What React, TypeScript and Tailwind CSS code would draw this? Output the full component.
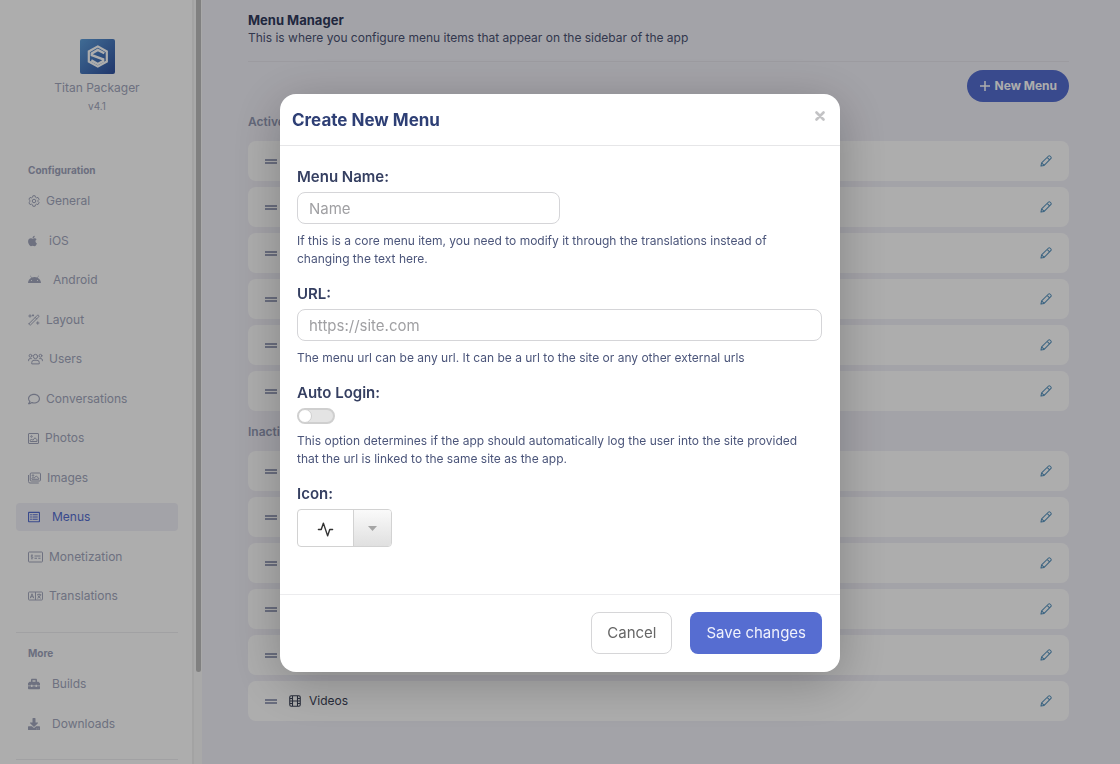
import React, { useState } from "react";
import { FaApple, FaAndroid, FaToolbox, FaDownload, FaRegComment, FaRegListAlt } from "react-icons/fa";

function GearIcon() {
  return (
    <svg className="h-3 w-3" viewBox="0 0 24 24" fill="none" stroke="currentColor" strokeWidth="2" strokeLinejoin="round">
      <path d="M9.800 1.500h4.400l.8 3 2 1.200 3-.8 2.200 3.800-2.200 2.200v2.200l2.200 2.200-2.200 3.800-3-.8-2 1.200-.8 3H9.800l-.8-3-2-1.200-3 .8-2.200-3.800L4 13.100v-2.200L1.800 8.700 4 4.900l3 .8 2-1.200z" />
      <circle cx="12" cy="12" r="3.500" />
    </svg>
  );
}

function WandIcon() {
  return (
    <svg className="h-3 w-3" viewBox="0 0 24 24" fill="none" stroke="currentColor" strokeWidth="2" strokeLinejoin="round" strokeLinecap="round">
      <path d="M2.500 18.800 18.800 2.500a1.500 1.500 0 0 1 2.100 0l.8.8a1.500 1.500 0 0 1 0 2.100L5.300 21.700a1.500 1.500 0 0 1-2.100 0l-.8-.8a1.500 1.500 0 0 1 0-2.100zM14.500 7l2.700 2.700" />
      <path d="M4 1.500v5M1.500 4h5M19.500 15.500v5M17 18h5M10 1.500v2.600M8.700 2.800h2.600" />
    </svg>
  );
}

function UsersIcon() {
  return (
    <svg className="h-3 w-[15px]" viewBox="0 0 30 24" fill="none" stroke="currentColor" strokeWidth="2" strokeLinecap="round" strokeLinejoin="round">
      <circle cx="15" cy="7" r="4.300" />
      <circle cx="5" cy="5.500" r="2.800" />
      <circle cx="25" cy="5.500" r="2.800" />
      <path d="M7.500 21v-2a4.500 4.500 0 0 1 4.500-4.500h6a4.500 4.500 0 0 1 4.500 4.500v2zM1.200 15.500v-1.300a3 3 0 0 1 3-3h2.600M28.800 15.500v-1.300a3 3 0 0 0-3-3h-2.600" />
    </svg>
  );
}

function PhotoIcon() {
  return (
    <svg className="h-[11px] w-[11px]" viewBox="0 0 22 22" fill="none" stroke="currentColor" strokeWidth="2" strokeLinejoin="round">
      <rect x="1" y="1" width="20" height="20" rx="1" />
      <circle cx="7" cy="7" r="1.500" />
      <path d="M4.500 17v-2.500L7 12l2.500 2.500 4.500-5 4 4V17z" />
    </svg>
  );
}

function ImagesIcon() {
  return (
    <svg className="h-3 w-[13px]" viewBox="0 0 26 24" fill="none" stroke="currentColor" strokeWidth="2" strokeLinejoin="round">
      <rect x="4.500" y="2" width="20.500" height="16" rx="2" />
      <path d="M21.500 22H4a3 3 0 0 1-3-3V6" />
      <circle cx="10" cy="7" r="1.500" />
      <path d="M8 14.500v-2l2-2 2 2 4.500-4.500 5 4.500v2z" />
    </svg>
  );
}

function CheckIcon() {
  return (
    <svg className="h-3 w-[15px]" viewBox="0 0 30 24" fill="none" stroke="currentColor" strokeWidth="2">
      <rect x="1" y="2" width="28" height="20" rx="1.500" />
      <path d="M9.800 9.300c-.5-.9-3.800-1-3.800.8s3.800 1.200 3.800 3-3.300 1.800-3.900.7M7.900 6.500v10.500" strokeWidth="1.600" />
      <path d="M13 10h12M13 14.500h5M20.500 14.500H25" />
    </svg>
  );
}

function TranslateIcon() {
  return (
    <svg className="h-3 w-[15px]" viewBox="0 0 30 24" fill="none" stroke="currentColor" strokeWidth="1.900">
      <rect x="1" y="4" width="28" height="16" rx="1.500" />
      <path d="M15 4v16M4.500 16.500 8 7.500l3.500 9M5.800 13.500h4.400M18 9.500h8.500M22.200 7v2.500M25 9.500c-.8 3.300-3 5.700-6.300 7M19.800 11.500c1.300 2.500 3.200 4 5.700 5" />
    </svg>
  );
}

function LogoIcon() {
  return (
    <svg className="h-[35px] w-[35px]" viewBox="0 0 35 35" role="img" aria-label="Titan Packager">
      <defs>
        <linearGradient id="logo" x1="0" y1="0" x2="1" y2="1">
          <stop offset="0" stopColor="#5f9fdb" />
          <stop offset="1" stopColor="#30519f" />
        </linearGradient>
      </defs>
      <rect width="35" height="35" rx="2" fill="url(#logo)" />
      <path d="M17.800 7.400 26.800 12.500v10L17.800 27.600 8.800 22.500v-10z" fill="none" stroke="#fff" strokeWidth="2.200" />
      <path d="M24.300 14.300 17.800 10.900 11.800 14.400v1.800l11.400 4.200v1.700l-5.400 2.900-6.500-3.600" fill="none" stroke="#fff" strokeWidth="2.400" />
    </svg>
  );
}

function FilmIcon() {
  return (
    <svg className="h-3 w-3" viewBox="0 0 24 24" fill="none" stroke="currentColor" strokeWidth="2.200">
      <rect x="1.500" y="1.500" width="21" height="21" rx="3" />
      <path d="M7 2v20M17 2v20M7 12h10M2 7h5M2 12h5M2 17h5M17 7h5M17 12h5M17 17h5" />
    </svg>
  );
}

function PencilIcon() {
  return (
    <svg className="h-3 w-3" viewBox="0 0 26 26" fill="none" stroke="currentColor" strokeWidth="2.200" strokeLinejoin="round">
      <path d="M2 24l1.500-7L18 2.700a3 3 0 0 1 4.200 0l1.100 1.100a3 3 0 0 1 0 4.200L9 22.500zM15.500 5.300l5.200 5.200M3.500 17 9 22.500" />
    </svg>
  );
}

function Handle() {
  return (
    <span className="flex w-3 flex-col gap-px" aria-hidden="true">
      <span className="h-0.5 bg-[#9ca2bb]" />
      <span className="h-0.5 bg-[#9ca2bb]" />
    </span>
  );
}

type NavItem = { label: string; icon: React.ReactNode; gap: string; active?: boolean };

const configuration: NavItem[] = [
  { label: "General", icon: <GearIcon />, gap: "gap-1.5" },
  { label: "iOS", icon: <FaApple className="h-3 w-[9px]" />, gap: "gap-3" },
  { label: "Android", icon: <FaAndroid className="h-[14px] w-[13px]" />, gap: "gap-3" },
  { label: "Layout", icon: <WandIcon />, gap: "gap-1.5" },
  { label: "Users", icon: <UsersIcon />, gap: "gap-1.5" },
  { label: "Conversations", icon: <FaRegComment className="h-3 w-3" />, gap: "gap-1.5" },
  { label: "Photos", icon: <PhotoIcon />, gap: "gap-1.5" },
  { label: "Images", icon: <ImagesIcon />, gap: "gap-1.5" },
  { label: "Menus", icon: <FaRegListAlt className="h-3 w-3" />, gap: "gap-3", active: true },
  { label: "Monetization", icon: <CheckIcon />, gap: "gap-1.5" },
  { label: "Translations", icon: <TranslateIcon />, gap: "gap-1.5" },
];

const more: NavItem[] = [
  { label: "Builds", icon: <FaToolbox className="h-3 w-3" />, gap: "gap-3" },
  { label: "Downloads", icon: <FaDownload className="h-3 w-3" />, gap: "gap-3" },
];

function NavLink({ item }: { item: NavItem }) {
  return (
    <a
      href="#"
      className={`flex h-7 items-center rounded-sm pl-3 text-[12px] ${item.gap} ${
        item.active ? "bg-[#f1f0f8] text-[#556ed0]" : "text-[#a2a7bd]"
      }`}
    >
      {item.icon}
      {item.label}
    </a>
  );
}

function Sidebar() {
  return (
    <aside className="flex h-screen w-[202px] shrink-0 overflow-hidden bg-white">
      <div className="flex-1 border-r border-[#f0f0f0] pr-[14px] pl-4">
        <div className="flex flex-col items-center pt-[39px] text-[#a2a7bd]">
          <LogoIcon />
          <p className="mt-[5px] text-[12px] leading-[18px]">Titan Packager</p>
          <p className="text-[10px] leading-[18px]">v4.1</p>
        </div>
        <h2 className="mt-[47px] pl-3 text-[10px] leading-4 font-bold text-[#9ea3bb]">Configuration</h2>
        <nav className="mt-[9px] flex min-h-[423px] flex-col justify-between" aria-label="Configuration">
          {configuration.map((item) => (
            <NavLink key={item.label} item={item} />
          ))}
        </nav>
        <hr className="mt-[22px] border-[#ededf0]" />
        <h2 className="mt-3 pl-3 text-[10px] leading-4 font-bold text-[#9ea3bb]">More</h2>
        <nav className="mt-[9px] flex flex-col gap-3" aria-label="More">
          {more.map((item) => (
            <NavLink key={item.label} item={item} />
          ))}
        </nav>
        <hr className="mt-[21px] border-[#ededf0]" />
      </div>
      <div className="w-[9px] border-l border-[#f0f0f0] bg-[#f9f9f9] pl-0.5">
        <div className="h-[88%] w-[5px] rounded-b-full bg-[#bdbdbd]" />
      </div>
    </aside>
  );
}

type Menu = { name: string; icon?: React.ReactNode };

const activeMenus: Menu[] = Array.from({ length: 6 }, () => ({ name: "" }));
const inactiveMenus: Menu[] = [
  ...Array.from({ length: 5 }, () => ({ name: "" })),
  { name: "Videos", icon: <FilmIcon /> },
];

function MenuList({ title, menus }: { title: string; menus: Menu[] }) {
  return (
    <section>
      <h2 className="text-[12px] leading-5 font-semibold text-[#9298b3]">{title}</h2>
      <ul className="mt-[9px] flex flex-col gap-1.5">
        {menus.map((menu, i) => (
          <li key={i} className="flex h-10 items-center rounded-lg bg-white pr-[17px] pl-[17px] text-[12px] text-[#3b4256]">
            <Handle />
            <span className="ml-3 flex flex-1 items-center gap-2">
              {menu.icon}
              {menu.name}
            </span>
            <button type="button" aria-label="Edit menu" className="text-[#5592be]">
              <PencilIcon />
            </button>
          </li>
        ))}
      </ul>
    </section>
  );
}

const label = "block text-[15px] leading-5 font-semibold text-[#353f61]";
const help = "mt-2 text-[12px] leading-[18px] text-[#4b557a]";
const field =
  "mt-[5px] block h-8 rounded-lg border border-[#d5d5d8] bg-white px-[11px] text-[15px] text-[#444] outline-none placeholder:text-[#a0a0a3]";

function CreateMenuDialog() {
  const [autoLogin, setAutoLogin] = useState(false);
  return (
    <div className="fixed inset-0 flex items-start justify-center bg-black/32 pt-[94px]">
      <form
        role="dialog"
        aria-labelledby="dialog-title"
        className="w-[560px] rounded-2xl bg-white shadow-[0_10px_50px_rgba(0,0,0,0.25)]"
      >
        <header className="flex h-[52px] items-center justify-between border-b border-[#e6e6e8] pr-3 pl-3">
          <h1 id="dialog-title" className="text-[17px] leading-6 font-bold text-[#2e3f75]">
            Create New Menu
          </h1>
          <button type="button" aria-label="Close" className="mb-2 flex h-4 w-4 items-center justify-center text-[#c3c3c5]">
            <svg className="h-[10px] w-[10px]" viewBox="0 0 10 10" stroke="currentColor" strokeWidth="2.600" strokeLinecap="round">
              <path d="M1.500 1.500l7 7M8.500 1.500l-7 7" />
            </svg>
          </button>
        </header>
        <div className="pt-[21px] pr-[18px] pb-[47px] pl-[17px]">
          <label htmlFor="menu-name" className={label}>Menu Name:</label>
          <input id="menu-name" type="text" placeholder="Name" className={`${field} w-1/2`} />
          <p className={help}>
            If this is a core menu item, you need to modify it through the translations instead of
            <br />
            changing the text here.
          </p>
          <label htmlFor="menu-url" className={`${label} mt-4`}>URL:</label>
          <input id="menu-url" type="text" placeholder="https://site.com" className={`${field} w-full`} />
          <p className={help}>The menu url can be any url. It can be a url to the site or any other external urls</p>
          <label htmlFor="auto-login" className={`${label} mt-4`}>Auto Login:</label>
          <input
            id="auto-login"
            type="checkbox"
            checked={autoLogin}
            onChange={(e) => setAutoLogin(e.target.checked)}
            className="mt-[5px] flex h-4 w-[38px] appearance-none items-center rounded-full border-2 border-[#cfcfcf] bg-[#e4e4e4] before:-ml-px before:h-[14px] before:w-[14px] before:rounded-full before:border before:border-[#cfcfcf] before:bg-white checked:justify-end checked:bg-[#556ed0]"
          />
          <p className={help}>
            This option determines if the app should automatically log the user into the site provided
            <br />
            that the url is linked to the same site as the app.
          </p>
          <label htmlFor="menu-icon" className={`${label} mt-4`}>Icon:</label>
          <button
            id="menu-icon"
            type="button"
            aria-label="Icon"
            className="mt-[5px] flex h-[38px] w-[95px] overflow-hidden rounded border border-[#d2d2d2]"
          >
            <span className="flex h-full flex-1 items-center justify-center pt-0.5 text-[#333]">
              <svg className="h-[17px] w-[17px]" viewBox="0 0 24 24" fill="none" stroke="currentColor" strokeWidth="2" strokeLinecap="round" strokeLinejoin="round">
                <path d="M22 12h-4l-3 9L9 3l-3 9H2" />
              </svg>
            </span>
            <span className="flex h-full w-[38px] items-center justify-center border-l border-[#d2d2d2] bg-linear-to-b from-[#fafafa] to-[#e0e0e0] text-[#a5a5a5]">
              <svg className="h-[5px] w-[9px]" viewBox="0 0 9 5" fill="currentColor">
                <path d="M0 0h9L4.500 5z" />
              </svg>
            </span>
          </button>
        </div>
        <footer className="flex justify-end gap-[18px] border-t border-[#ececee] pt-[17px] pr-[18px] pb-[18px]">
          <button type="button" className="h-[42px] rounded-lg border border-[#d6d6d8] px-[15px] text-[15px] text-[#666]">
            Cancel
          </button>
          <button type="submit" className="h-[42px] rounded-lg bg-[#566dd1] px-4 text-[15px] text-[#eff1fc]">
            Save changes
          </button>
        </footer>
      </form>
    </div>
  );
}

export default function App() {
  return (
    <div className="flex h-screen overflow-hidden bg-[#f1f0f8] font-['Inter','Liberation_Sans',sans-serif]">
      <Sidebar />
      <main className="min-w-0 flex-1 pr-[51px] pl-[46px]">
        <header className="border-b border-[#e6e5ec] pt-[10px] pb-[15px]">
          <h1 className="text-[13px] leading-5 font-bold text-[#303a5c]">Menu Manager</h1>
          <p className="text-[12px] leading-4 text-[#4a5272]">
            This is where you configure menu items that appear on the sidebar of the app
          </p>
        </header>
        <div className="flex justify-end pt-2">
          <button type="button" className="flex h-8 items-center gap-1 rounded-full bg-[#556ed0] px-3 text-[12px] font-bold text-white">
            <svg className="h-3 w-3" viewBox="0 0 12 12" stroke="currentColor" strokeWidth="1.500">
              <path d="M6 1v10M1 6h10" />
            </svg>
            New Menu
          </button>
        </div>
        <div className="mt-[10px] flex flex-col gap-[11px]">
          <MenuList title="Active" menus={activeMenus} />
          <MenuList title="Inactive" menus={inactiveMenus} />
        </div>
      </main>
      <CreateMenuDialog />
    </div>
  );
}
